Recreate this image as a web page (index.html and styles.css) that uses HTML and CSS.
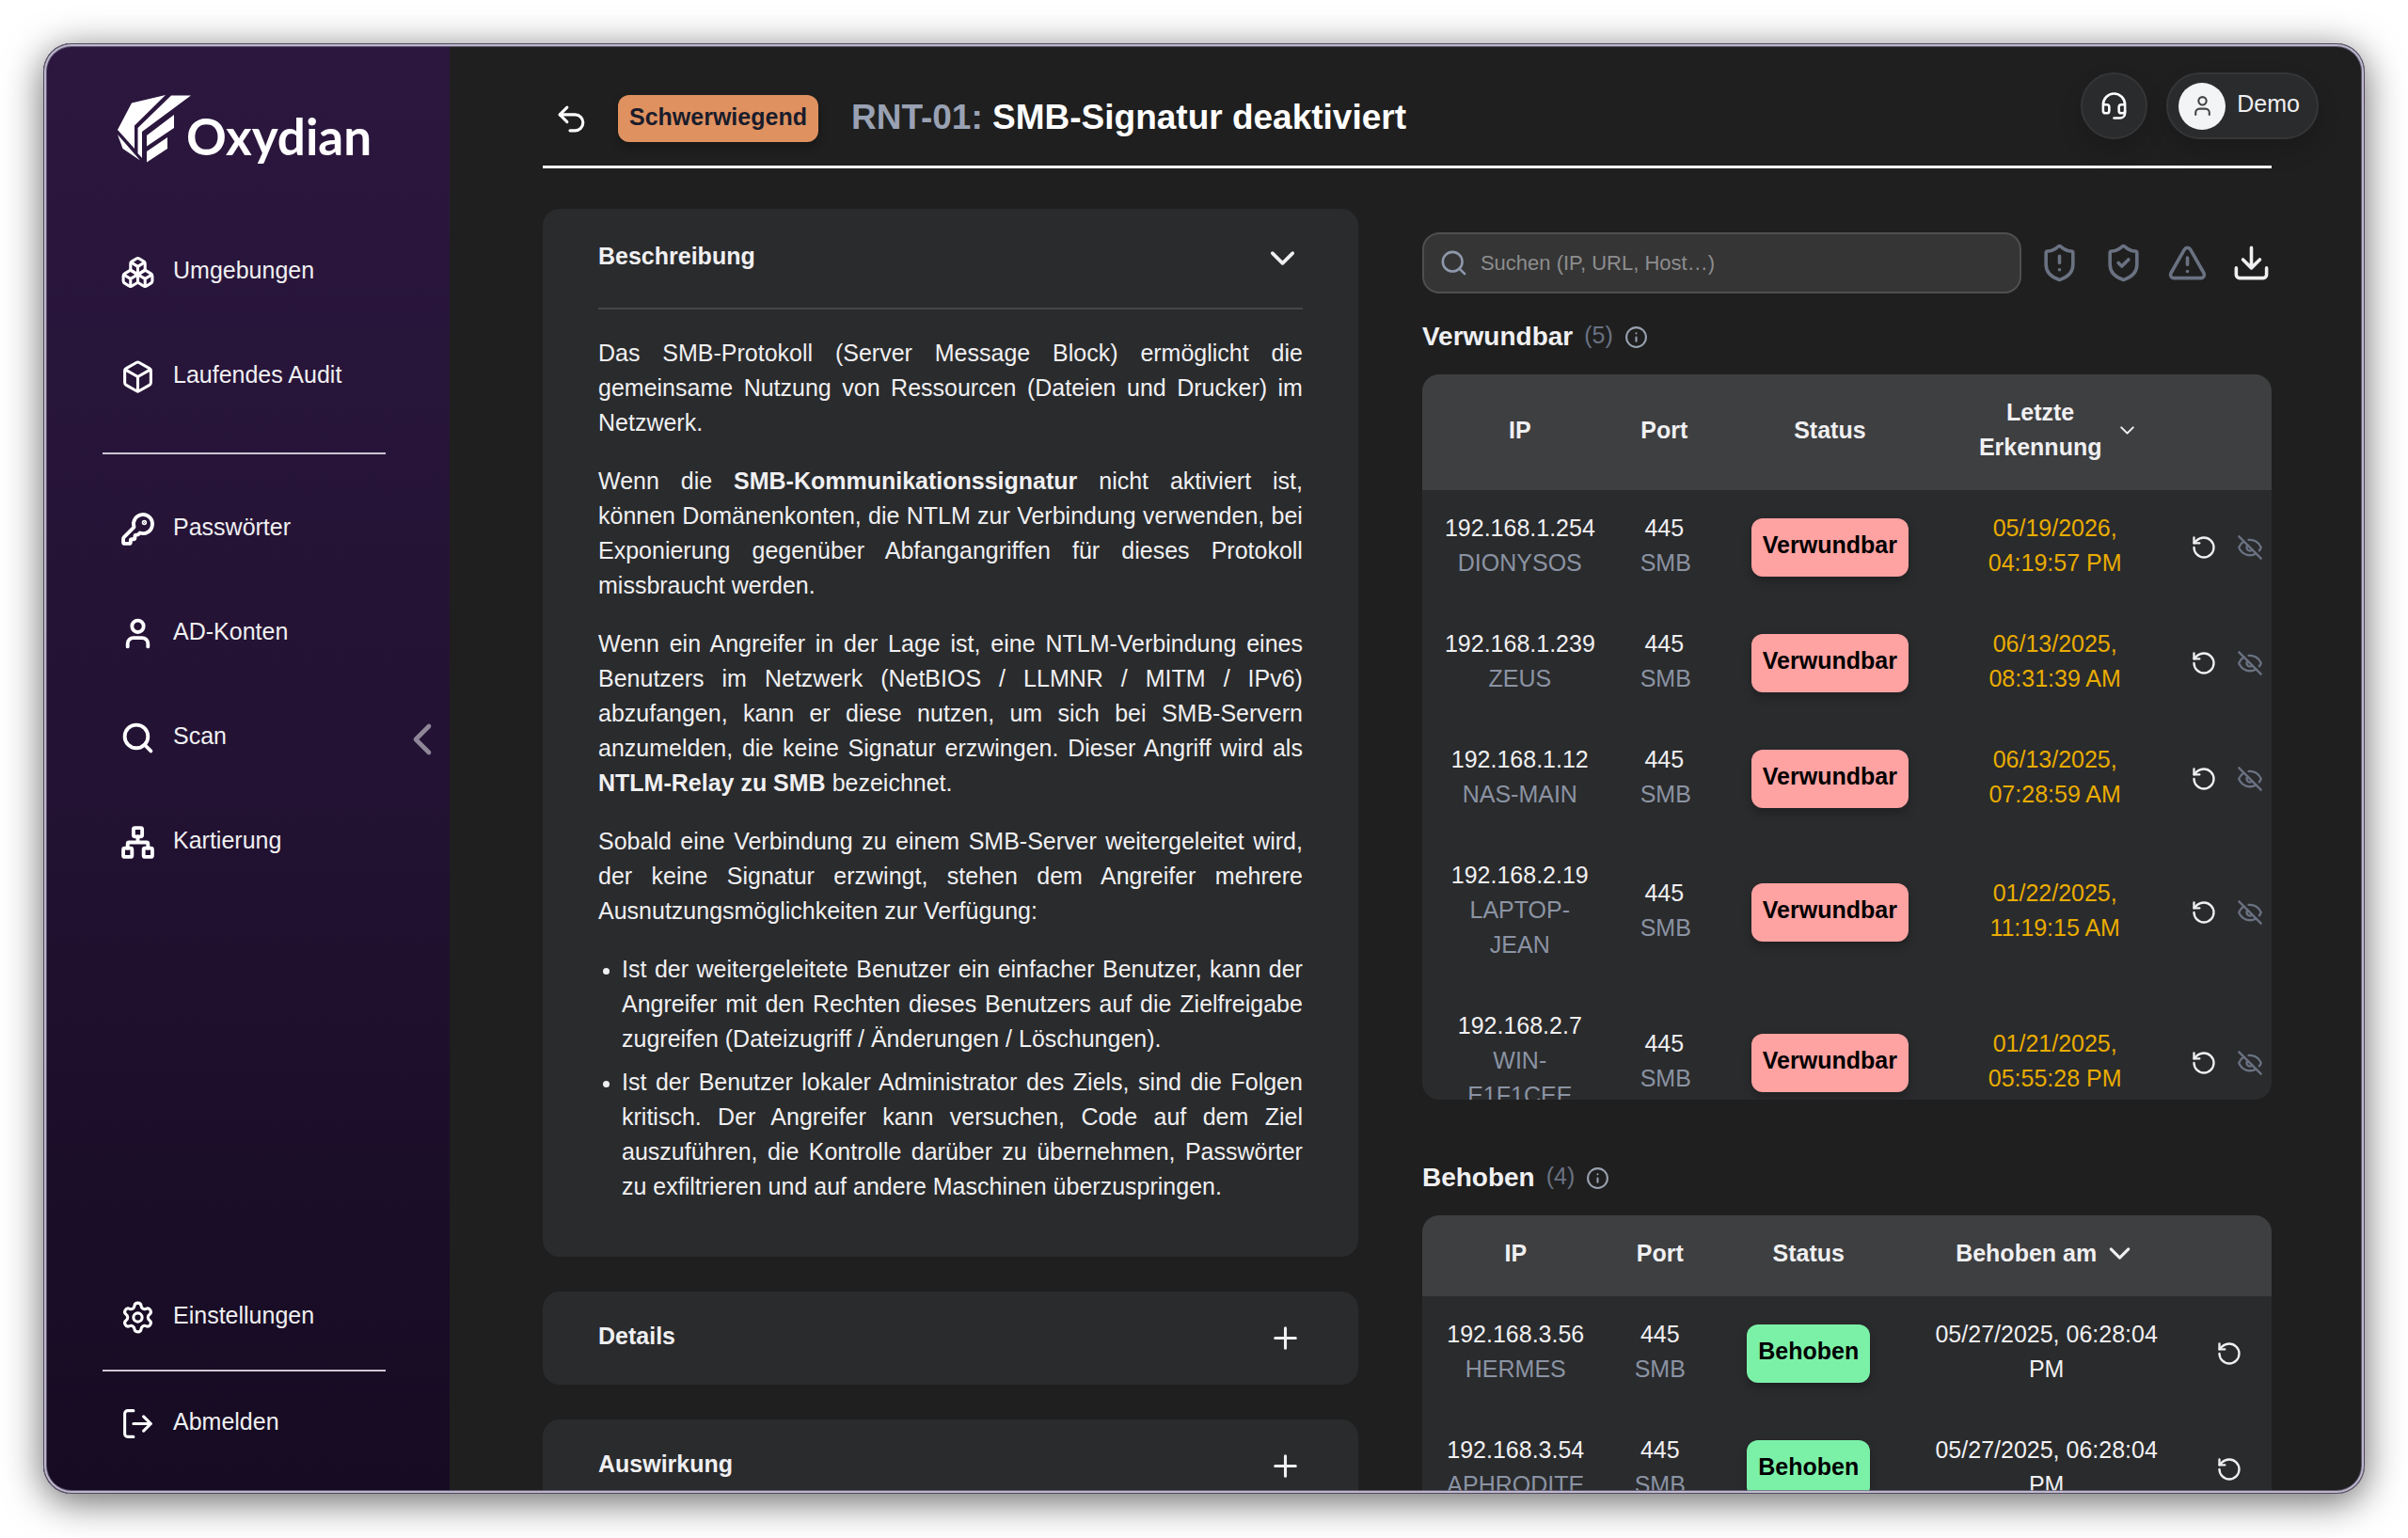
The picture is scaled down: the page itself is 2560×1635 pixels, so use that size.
FILE: index.html
```html
<!DOCTYPE html>
<html lang="de">
<head>
  <meta charset="UTF-8" />
  <meta name="viewport" content="width=device-width, initial-scale=1.0"/>
  <title>Oxydian – SMB-Signatur deaktiviert</title>
  <link rel="stylesheet" href="styles.css">
</head>
<body>
  <!-- icon sprite -->
  <svg class="sprite" aria-hidden="true">
    <symbol id="i-boxes" viewBox="0 0 24 24">
      <path d="M2.97 12.92A2 2 0 0 0 2 14.63v3.24a2 2 0 0 0 .97 1.71l3 1.8a2 2 0 0 0 2.06 0L12 19v-5.5l-5-3-4.03 2.42Z"/>
      <path d="m7 16.5-4.74-2.85M7 16.5l5-3M7 16.5v5.17"/>
      <path d="M12 13.5V19l3.97 2.38a2 2 0 0 0 2.06 0l3-1.8a2 2 0 0 0 .97-1.71v-3.24a2 2 0 0 0-.97-1.71L17 10.5l-5 3Z"/>
      <path d="m17 16.5-5-3M17 16.5l4.74-2.85M17 16.5v5.17"/>
      <path d="M7.97 4.42A2 2 0 0 0 7 6.13v4.37l5 3 5-3V6.13a2 2 0 0 0-.97-1.71l-3-1.8a2 2 0 0 0-2.06 0l-3 1.8Z"/>
      <path d="M12 8 7.26 5.15M12 8l4.74-2.85M12 13.5V8"/>
    </symbol>
    <symbol id="i-box" viewBox="0 0 24 24">
      <path d="M21 8a2 2 0 0 0-1-1.73l-7-4a2 2 0 0 0-2 0l-7 4A2 2 0 0 0 3 8v8a2 2 0 0 0 1 1.73l7 4a2 2 0 0 0 2 0l7-4A2 2 0 0 0 21 16Z"/>
      <path d="m3.3 7 8.7 5 8.7-5M12 22V12"/>
    </symbol>
    <symbol id="i-key" viewBox="0 0 24 24">
      <path d="M2.586 17.414A2 2 0 0 0 2 18.828V21a1 1 0 0 0 1 1h3a1 1 0 0 0 1-1v-1a1 1 0 0 1 1-1h1a1 1 0 0 0 1-1v-1a1 1 0 0 1 1-1h.172a2 2 0 0 0 1.414-.586l.814-.814a6.5 6.5 0 1 0-4-4z"/>
      <circle cx="16.5" cy="7.5" r=".5" fill="currentColor"/>
    </symbol>
    <symbol id="i-user" viewBox="0 0 24 24">
      <path d="M19 21v-2a4 4 0 0 0-4-4H9a4 4 0 0 0-4 4v2"/>
      <circle cx="12" cy="7" r="4"/>
    </symbol>
    <symbol id="i-search" viewBox="0 0 24 24">
      <circle cx="11" cy="11" r="8"/>
      <path d="m21 21-4.3-4.3"/>
    </symbol>
    <symbol id="i-network" viewBox="0 0 24 24">
      <rect x="16" y="16" width="6" height="6" rx="1"/>
      <rect x="2" y="16" width="6" height="6" rx="1"/>
      <rect x="9" y="2" width="6" height="6" rx="1"/>
      <path d="M5 16v-3a1 1 0 0 1 1-1h12a1 1 0 0 1 1 1v3M12 12V8"/>
    </symbol>
    <symbol id="i-settings" viewBox="0 0 24 24">
      <path d="M9.671 4.136a2.34 2.34 0 0 1 4.659 0 2.34 2.34 0 0 0 3.319 1.915 2.34 2.34 0 0 1 2.33 4.033 2.34 2.34 0 0 0 0 3.831 2.34 2.34 0 0 1-2.33 4.033 2.34 2.34 0 0 0-3.319 1.915 2.34 2.34 0 0 1-4.659 0 2.34 2.34 0 0 0-3.32-1.915 2.34 2.34 0 0 1-2.33-4.033 2.34 2.34 0 0 0 0-3.831A2.34 2.34 0 0 1 6.35 6.051a2.34 2.34 0 0 0 3.319-1.915"/>
      <circle cx="12" cy="12" r="3"/>
    </symbol>
    <symbol id="i-logout" viewBox="0 0 24 24">
      <path d="M9 21H5a2 2 0 0 1-2-2V5a2 2 0 0 1 2-2h4M16 17l5-5-5-5M21 12H9"/>
    </symbol>
    <symbol id="i-headset" viewBox="0 0 24 24">
      <path d="M3 11h3a2 2 0 0 1 2 2v3a2 2 0 0 1-2 2H5a2 2 0 0 1-2-2v-5Zm0 0a9 9 0 1 1 18 0m0 0v5a2 2 0 0 1-2 2h-1a2 2 0 0 1-2-2v-3a2 2 0 0 1 2-2h3Z"/>
      <path d="M21 16v2a4 4 0 0 1-4 4h-5"/>
    </symbol>
    <symbol id="i-undo" viewBox="0 0 24 24">
      <path d="M9 14 4 9l5-5"/>
      <path d="M4 9h10.5a5.5 5.5 0 0 1 0 11H11"/>
    </symbol>
    <symbol id="i-shield-alert" viewBox="0 0 24 24">
      <path d="M20 13c0 5-3.5 7.5-7.66 8.95a1 1 0 0 1-.67-.01C7.5 20.5 4 18 4 13V6a1 1 0 0 1 1-1c2 0 4.5-1.2 6.24-2.72a1.17 1.17 0 0 1 1.52 0C14.51 3.81 17 5 19 5a1 1 0 0 1 1 1z"/>
      <path d="M12 8v4M12 16h.01"/>
    </symbol>
    <symbol id="i-shield-check" viewBox="0 0 24 24">
      <path d="M20 13c0 5-3.5 7.5-7.66 8.95a1 1 0 0 1-.67-.01C7.5 20.5 4 18 4 13V6a1 1 0 0 1 1-1c2 0 4.5-1.2 6.24-2.72a1.17 1.17 0 0 1 1.52 0C14.51 3.81 17 5 19 5a1 1 0 0 1 1 1z"/>
      <path d="m9 12 2 2 4-4"/>
    </symbol>
    <symbol id="i-triangle" viewBox="0 0 24 24">
      <path d="m21.73 18-8-14a2 2 0 0 0-3.48 0l-8 14A2 2 0 0 0 4 21h16a2 2 0 0 0 1.73-3"/>
      <path d="M12 9v4M12 17h.01"/>
    </symbol>
    <symbol id="i-download" viewBox="0 0 24 24">
      <path d="M21 15v4a2 2 0 0 1-2 2H5a2 2 0 0 1-2-2v-4M7 10l5 5 5-5M12 15V3"/>
    </symbol>
    <symbol id="i-info" viewBox="0 0 24 24">
      <circle cx="12" cy="12" r="10"/>
      <path d="M12 16v-4M12 8h.01"/>
    </symbol>
    <symbol id="i-down" viewBox="0 0 24 24"><path d="m6 9 6 6 6-6"/></symbol>
    <symbol id="i-left" viewBox="0 0 24 24"><path d="m15 18-6-6 6-6"/></symbol>
    <symbol id="i-plus" viewBox="0 0 24 24"><path d="M5 12h14M12 5v14"/></symbol>
    <symbol id="i-rotate" viewBox="0 0 24 24">
      <path d="M3 12a9 9 0 1 0 9-9 9.75 9.75 0 0 0-6.74 2.74L3 8"/>
      <path d="M3 3v5h5"/>
    </symbol>
    <symbol id="i-eye-off" viewBox="0 0 24 24">
      <path d="M10.733 5.076a10.744 10.744 0 0 1 11.205 6.575 1 1 0 0 1 0 .696 10.747 10.747 0 0 1-1.444 2.49"/>
      <path d="M14.084 14.158a3 3 0 0 1-4.242-4.242"/>
      <path d="M17.479 17.499a10.75 10.75 0 0 1-15.417-5.151 1 1 0 0 1 0-.696 10.75 10.75 0 0 1 4.446-5.143"/>
      <path d="m2 2 20 20"/>
    </symbol>
  </svg>

  <div class="app">
    <aside class="sidebar">
      <a class="logo" href="#">
        <svg class="logo-mark" viewBox="0 0 78 72" fill="#fff" aria-hidden="true">
          <path d="M15 8.500 51 0 18 32.500V57L0 37z"/>
          <path d="M57 .5H78L26 39V67L21.500 62V35z"/>
          <path d="M60 21V35L31 54.500V43z"/>
          <path d="M53 45V57L31 71.500V60z"/>
          <path d="M0 42 24 69.500 5.500 57z"/>
        </svg>
        <span class="logo-text">Oxydian</span>
      </a>

      <nav class="nav">
        <a class="nav-item" href="#"><svg class="icon"><use href="#i-boxes"/></svg><span class="label">Umgebungen</span></a>
        <a class="nav-item" href="#"><svg class="icon"><use href="#i-box"/></svg><span class="label">Laufendes Audit</span></a>
        <hr class="nav-line spaced">
        <a class="nav-item" href="#"><svg class="icon icon-bold"><use href="#i-key"/></svg><span class="label">Passwörter</span></a>
        <a class="nav-item" href="#"><svg class="icon icon-bold"><use href="#i-user"/></svg><span class="label">AD-Konten</span></a>
        <a class="nav-item" href="#"><svg class="icon icon-bold"><use href="#i-search"/></svg><span class="label">Scan</span></a>
        <a class="nav-item" href="#"><svg class="icon icon-bold"><use href="#i-network"/></svg><span class="label">Kartierung</span></a>
      </nav>

      <div class="nav-bottom">
        <a class="nav-item" href="#"><svg class="icon"><use href="#i-settings"/></svg><span class="label">Einstellungen</span></a>
        <hr class="nav-line">
        <a class="nav-item" href="#"><svg class="icon"><use href="#i-logout"/></svg><span class="label">Abmelden</span></a>
      </div>

      <button class="collapse" aria-label="Menü einklappen"><svg class="icon"><use href="#i-left"/></svg></button>
    </aside>

    <main class="main">
      <header class="page-header">
        <button class="back" aria-label="Zurück"><svg class="icon"><use href="#i-undo"/></svg></button>
        <span class="severity"><span class="label">Schwerwiegend</span></span>
        <h1 class="title label"><span class="title-id">RNT-01:</span> SMB-Signatur deaktiviert</h1>
      </header>

      <div class="columns">
        <div class="left">
          <section class="card">
            <button class="card-head open"><span class="label">Beschreibung</span><svg class="icon icon-lg"><use href="#i-down"/></svg></button>
            <div class="card-body">
              <p>Das SMB-Protokoll (Server Message Block) ermöglicht die gemeinsame Nutzung von Ressourcen (Dateien und Drucker) im Netzwerk.</p>
              <p>Wenn die <strong>SMB-Kommunikationssignatur</strong> nicht aktiviert ist, können Domänenkonten, die NTLM zur Verbindung verwenden, bei Exponierung gegenüber Abfangangriffen für dieses Protokoll missbraucht werden.</p>
              <p>Wenn ein Angreifer in der Lage ist, eine NTLM-Verbindung eines Benutzers im Netzwerk (NetBIOS / LLMNR / MITM / IPv6) abzufangen, kann er diese nutzen, um sich bei SMB-Servern anzumelden, die keine Signatur erzwingen. Dieser Angriff wird als <strong>NTLM-Relay zu SMB</strong> bezeichnet.</p>
              <p>Sobald eine Verbindung zu einem SMB-Server weitergeleitet wird, der keine Signatur erzwingt, stehen dem Angreifer mehrere Ausnutzungsmöglichkeiten zur Verfügung:</p>
              <ul>
                <li>Ist der weitergeleitete Benutzer ein einfacher Benutzer, kann der Angreifer mit den Rechten dieses Benutzers auf die Zielfreigabe zugreifen (Dateizugriff / Änderungen / Löschungen).</li>
                <li>Ist der Benutzer lokaler Administrator des Ziels, sind die Folgen kritisch. Der Angreifer kann versuchen, Code auf dem Ziel auszuführen, die Kontrolle darüber zu übernehmen, Passwörter zu exfiltrieren und auf andere Maschinen überzuspringen.</li>
              </ul>
            </div>
          </section>

          <section class="card">
            <button class="card-head"><span class="label">Details</span><svg class="icon"><use href="#i-plus"/></svg></button>
          </section>

          <section class="card">
            <button class="card-head"><span class="label">Auswirkung</span><svg class="icon"><use href="#i-plus"/></svg></button>
          </section>
        </div>

        <div class="right">
          <div class="toolbar">
            <label class="search">
              <svg class="icon"><use href="#i-search"/></svg>
              <input type="text" placeholder="Suchen (IP, URL, Host…)" aria-label="Suchen">
            </label>
            <div class="tools">
              <button class="tool" aria-label="Verwundbar"><svg class="icon icon-lg"><use href="#i-shield-alert"/></svg></button>
              <button class="tool" aria-label="Behoben"><svg class="icon icon-lg"><use href="#i-shield-check"/></svg></button>
              <button class="tool" aria-label="Warnungen"><svg class="icon icon-lg"><use href="#i-triangle"/></svg></button>
              <button class="tool tool-light" aria-label="Herunterladen"><svg class="icon icon-lg"><use href="#i-download"/></svg></button>
            </div>
          </div>

          <h2 class="section-title">Verwundbar <span class="count label">(5)</span> <svg class="icon icon-sm"><use href="#i-info"/></svg></h2>
          <div class="table-box">
            <table class="hosts hosts-open">
              <colgroup><col class="c-ip"><col class="c-port"><col class="c-status"><col class="c-date"><col></colgroup>
              <thead>
                <tr>
                  <th>IP</th>
                  <th>Port</th>
                  <th>Status</th>
                  <th><span class="sort"><span>Letzte Erkennung</span><svg class="icon icon-sm"><use href="#i-down"/></svg></span></th>
                  <th></th>
                </tr>
              </thead>
              <tbody>
                <tr>
                  <td>192.168.1.254<div class="muted">DIONYSOS</div></td>
                  <td>445<div class="muted">SMB</div></td>
                  <td class="cell-mid"><span class="badge badge-red"><span class="label">Verwundbar</span></span></td>
                  <td class="date">05/19/2026, 04:19:57 PM</td>
                  <td class="cell-mid"><div class="actions"><button aria-label="Erneut prüfen"><svg class="icon"><use href="#i-rotate"/></svg></button><button class="dim" aria-label="Ausblenden"><svg class="icon"><use href="#i-eye-off"/></svg></button></div></td>
                </tr>
                <tr>
                  <td>192.168.1.239<div class="muted">ZEUS</div></td>
                  <td>445<div class="muted">SMB</div></td>
                  <td class="cell-mid"><span class="badge badge-red"><span class="label">Verwundbar</span></span></td>
                  <td class="date">06/13/2025, 08:31:39 AM</td>
                  <td class="cell-mid"><div class="actions"><button aria-label="Erneut prüfen"><svg class="icon"><use href="#i-rotate"/></svg></button><button class="dim" aria-label="Ausblenden"><svg class="icon"><use href="#i-eye-off"/></svg></button></div></td>
                </tr>
                <tr>
                  <td>192.168.1.12<div class="muted">NAS-MAIN</div></td>
                  <td>445<div class="muted">SMB</div></td>
                  <td class="cell-mid"><span class="badge badge-red"><span class="label">Verwundbar</span></span></td>
                  <td class="date">06/13/2025, 07:28:59 AM</td>
                  <td class="cell-mid"><div class="actions"><button aria-label="Erneut prüfen"><svg class="icon"><use href="#i-rotate"/></svg></button><button class="dim" aria-label="Ausblenden"><svg class="icon"><use href="#i-eye-off"/></svg></button></div></td>
                </tr>
                <tr>
                  <td>192.168.2.19<div class="muted">LAPTOP-JEAN</div></td>
                  <td>445<div class="muted">SMB</div></td>
                  <td class="cell-mid"><span class="badge badge-red"><span class="label">Verwundbar</span></span></td>
                  <td class="date">01/22/2025, 11:19:15 AM</td>
                  <td class="cell-mid"><div class="actions"><button aria-label="Erneut prüfen"><svg class="icon"><use href="#i-rotate"/></svg></button><button class="dim" aria-label="Ausblenden"><svg class="icon"><use href="#i-eye-off"/></svg></button></div></td>
                </tr>
                <tr>
                  <td>192.168.2.7<div class="muted">WIN-E1F1CEE</div></td>
                  <td>445<div class="muted">SMB</div></td>
                  <td class="cell-mid"><span class="badge badge-red"><span class="label">Verwundbar</span></span></td>
                  <td class="date">01/21/2025, 05:55:28 PM</td>
                  <td class="cell-mid"><div class="actions"><button aria-label="Erneut prüfen"><svg class="icon"><use href="#i-rotate"/></svg></button><button class="dim" aria-label="Ausblenden"><svg class="icon"><use href="#i-eye-off"/></svg></button></div></td>
                </tr>
              </tbody>
            </table>
          </div>

          <h2 class="section-title second">Behoben <span class="count label">(4)</span> <svg class="icon icon-sm"><use href="#i-info"/></svg></h2>
          <div class="table-box">
            <table class="hosts hosts-fixed">
              <colgroup><col class="c-ip"><col class="c-port"><col class="c-status"><col class="c-date"><col></colgroup>
              <thead>
                <tr>
                  <th>IP</th>
                  <th>Port</th>
                  <th>Status</th>
                  <th><span class="sort"><span>Behoben am</span><svg class="icon"><use href="#i-down"/></svg></span></th>
                  <th></th>
                </tr>
              </thead>
              <tbody>
                <tr>
                  <td>192.168.3.56<div class="muted">HERMES</div></td>
                  <td>445<div class="muted">SMB</div></td>
                  <td class="cell-mid"><span class="badge badge-green"><span class="label">Behoben</span></span></td>
                  <td>05/27/2025, 06:28:04 PM</td>
                  <td class="cell-mid"><div class="actions"><button aria-label="Erneut prüfen"><svg class="icon"><use href="#i-rotate"/></svg></button></div></td>
                </tr>
                <tr>
                  <td>192.168.3.54<div class="muted">APHRODITE</div></td>
                  <td>445<div class="muted">SMB</div></td>
                  <td class="cell-mid"><span class="badge badge-green"><span class="label">Behoben</span></span></td>
                  <td>05/27/2025, 06:28:04 PM</td>
                  <td class="cell-mid"><div class="actions"><button aria-label="Erneut prüfen"><svg class="icon"><use href="#i-rotate"/></svg></button></div></td>
                </tr>
              </tbody>
            </table>
          </div>
        </div>
      </div>

      <div class="account">
        <button class="pill round" aria-label="Support"><svg class="icon"><use href="#i-headset"/></svg></button>
        <button class="pill">
          <span class="avatar"><svg class="icon icon-sm"><use href="#i-user"/></svg></span>
          <span class="label">Demo</span>
        </button>
      </div>
    </main>
  </div>
</body>
</html>
```
FILE: styles.css
```css
* {
  box-sizing: border-box;
}
body {
  margin: 0;
  height: 100vh;
  padding: 46px 46px 47px;
  display: flex;
  background: #fff;
  color: #f0f0f2;
  font-family: "Liberation Sans", Arial, sans-serif;
  font-size: 25px;
  line-height: 37px;
}
button {
  padding: 0;
  border: none;
  background: none;
  color: inherit;
  font: inherit;
  cursor: pointer;
}
a {
  color: inherit;
  text-decoration: none;
}
.sprite {
  position: absolute;
  width: 0;
  height: 0;
}
.icon {
  display: block;
  flex: none;
  width: 37px;
  height: 37px;
  fill: none;
  stroke: currentColor;
  stroke-width: 2;
  stroke-linecap: round;
  stroke-linejoin: round;
}
.icon-lg {
  width: 43px;
  height: 43px;
}
.icon-sm {
  width: 25px;
  height: 25px;
}
.icon-bold {
  stroke-width: 2.5;
}
.label {
  padding-bottom: 4px;
}

/* window */
.app {
  position: relative;
  flex: 1;
  display: flex;
  min-width: 0;
  overflow: hidden;
  border-radius: 30px;
  background: #1f1f1f;
  box-shadow: 0 8px 40px rgba(0, 0, 0, 0.6);
}
.app::after {
  content: "";
  position: absolute;
  inset: 0;
  border-radius: 30px;
  pointer-events: none;
  box-shadow: inset 0 0 0 1px rgba(70, 62, 88, 0.9), inset 0 0 0 3px rgba(200, 194, 212, 0.9), inset 0 0 0 4px rgba(110, 102, 130, 0.8);
}

/* sidebar */
.sidebar {
  position: relative;
  flex: none;
  display: flex;
  flex-direction: column;
  width: 432px;
  padding: 55px 68px 19px 63px;
  background: linear-gradient(#2c173f, #231233 50%, #160b22);
}
.logo {
  display: flex;
  align-items: flex-start;
  height: 133px;
  padding-left: 16px;
}
.logo-mark {
  flex: none;
  width: 78px;
  height: 72px;
}
.logo-text {
  margin: 16px 0 0 -5px;
  color: #fff;
  font-family: Lato, "Liberation Sans", sans-serif;
  font-size: 53px;
  font-weight: 700;
  line-height: 56px;
}
.nav {
  flex: 1;
}
.nav-item {
  display: flex;
  align-items: center;
  gap: 19px;
  height: 111px;
  padding-left: 19px;
}
.nav-item .icon {
  color: #fff;
}
.nav-line {
  height: 2px;
  margin: 0;
  border: none;
  background: #cbc5d2;
}
.nav-line.spaced {
  margin: 25px 0 24px;
}
.collapse {
  position: absolute;
  top: 50%;
  right: 1px;
  margin-top: -59px;
  color: #8f8799;
}
.collapse .icon {
  width: 56px;
  height: 56px;
}

/* page */
.main {
  position: relative;
  flex: 1;
  min-width: 0;
  padding: 0 99px;
  overflow: hidden;
}
.page-header {
  display: flex;
  align-items: center;
  height: 133px;
  padding: 30px 0 0 12px;
  border-bottom: 3px solid #fff;
}
.back {
  margin-right: 31px;
  color: #fff;
}
.severity {
  display: flex;
  padding: 5px 12px 4px;
  margin-right: 35px;
  border-radius: 12px;
  background: #df9160;
  color: #1a1c2b;
  font-weight: bold;
  box-shadow: 0 5px 10px rgba(0, 0, 0, 0.25);
}
.title {
  margin: 0;
  color: #fff;
  font-size: 37px;
}
.title-id {
  color: #99a1b3;
}
.columns {
  display: grid;
  grid-template-columns: 24fr 25fr;
  gap: 68px;
  padding-top: 43px;
}

/* cards */
.left {
  display: flex;
  flex-direction: column;
  gap: 37px;
}
.card {
  padding: 0 59px;
  border-radius: 18px;
  background: #2a2b2d;
}
.card-head {
  display: flex;
  align-items: center;
  justify-content: space-between;
  width: 100%;
  height: 99px;
  font-weight: bold;
  text-align: left;
}
.card-head.open {
  height: 105px;
}
.card-body {
  padding: 28px 0 56px;
  border-top: 2px solid #454648;
  text-align: justify;
}
.card-body p {
  margin: 0 0 25px;
}
.card-body ul {
  margin: 0;
  padding-left: 25px;
}
.card-body li + li {
  margin-top: 9px;
}
.card-body li::marker {
  font-size: 22px;
}

/* toolbar */
.toolbar {
  display: flex;
  align-items: center;
  gap: 19px;
  padding-top: 25px;
}
.search {
  flex: 1;
  display: flex;
  align-items: center;
  gap: 13px;
  height: 65px;
  padding: 0 16px;
  border: 2px solid #4f4f50;
  border-radius: 18px;
  background: #353535;
}
.search .icon {
  width: 31px;
  height: 31px;
  color: #8e98ab;
}
.search input {
  flex: 1;
  min-width: 0;
  padding: 0;
  border: none;
  outline: none;
  background: none;
  color: inherit;
  font: inherit;
  font-size: 22px;
}
.search input::placeholder {
  color: #8d8d8f;
}
.tools {
  display: flex;
  gap: 25px;
}
.tool {
  color: #6a7282;
}
.tool-light {
  color: #f0f0f2;
}

/* tables */
.section-title {
  display: flex;
  align-items: center;
  gap: 12px;
  margin: 25px 0 19px;
  font-size: 28px;
  line-height: 42px;
}
.section-title.second {
  margin-top: 62px;
}
.section-title .icon {
  color: #99a1af;
}
.count {
  color: #6a7282;
  font-size: 25px;
  font-weight: normal;
  line-height: 37px;
}
.table-box {
  max-height: 771px;
  overflow: hidden;
  border-radius: 18px;
  background: #2a2b2d;
}
.hosts {
  width: 100%;
  border-collapse: collapse;
  table-layout: fixed;
  text-align: center;
}
.hosts-open .c-ip { width: 23%; }
.hosts-open .c-port { width: 11%; }
.hosts-open .c-status { width: 28%; }
.hosts-open .c-date { width: 25%; }
.hosts-fixed .c-ip { width: 22%; }
.hosts-fixed .c-port { width: 12%; }
.hosts-fixed .c-status { width: 23%; }
.hosts-fixed .c-date { width: 33%; }
.hosts th,
.hosts td {
  padding: 22px 24px 27px;
  vertical-align: middle;
}
.hosts th {
  background: #3e3f41;
}
.hosts .cell-mid {
  padding: 24px 0 25px;
}
.sort {
  display: flex;
  align-items: center;
  justify-content: center;
  gap: 6px;
}
.muted {
  color: #8b93a3;
}
.date {
  color: #e9ac00;
}
.badge {
  display: inline-block;
  padding: 10px 12px 15px;
  border-radius: 12px;
  color: #000;
  font-weight: bold;
  vertical-align: middle;
  box-shadow: 0 5px 10px rgba(0, 0, 0, 0.25);
}
.badge-red {
  background: #ffa2a2;
}
.badge-green {
  background: #7bf1a8;
}
.actions {
  display: flex;
  justify-content: center;
  gap: 21px;
}
.hosts-open .actions {
  padding-left: 22px;
}
.actions .icon {
  width: 28px;
  height: 28px;
}
.dim {
  color: #6a7282;
}

/* account pills, over the page header */
.account {
  position: absolute;
  top: 31px;
  right: 49px;
  display: flex;
  gap: 20px;
}
.pill {
  display: flex;
  align-items: center;
  gap: 12px;
  height: 71px;
  padding: 0 18px 0 11px;
  border: 2px solid #353638;
  border-radius: 36px;
  background: #2a2b2d;
  box-shadow: 0 12px 24px rgba(0, 0, 0, 0.15);
}
.pill.round {
  justify-content: center;
  width: 71px;
  padding: 0;
}
.pill.round .icon {
  width: 31px;
  height: 31px;
  color: #fff;
}
.avatar {
  display: flex;
  align-items: center;
  justify-content: center;
  width: 50px;
  height: 50px;
  border-radius: 50%;
  background: #f3f4f6;
  color: #444;
}
```
